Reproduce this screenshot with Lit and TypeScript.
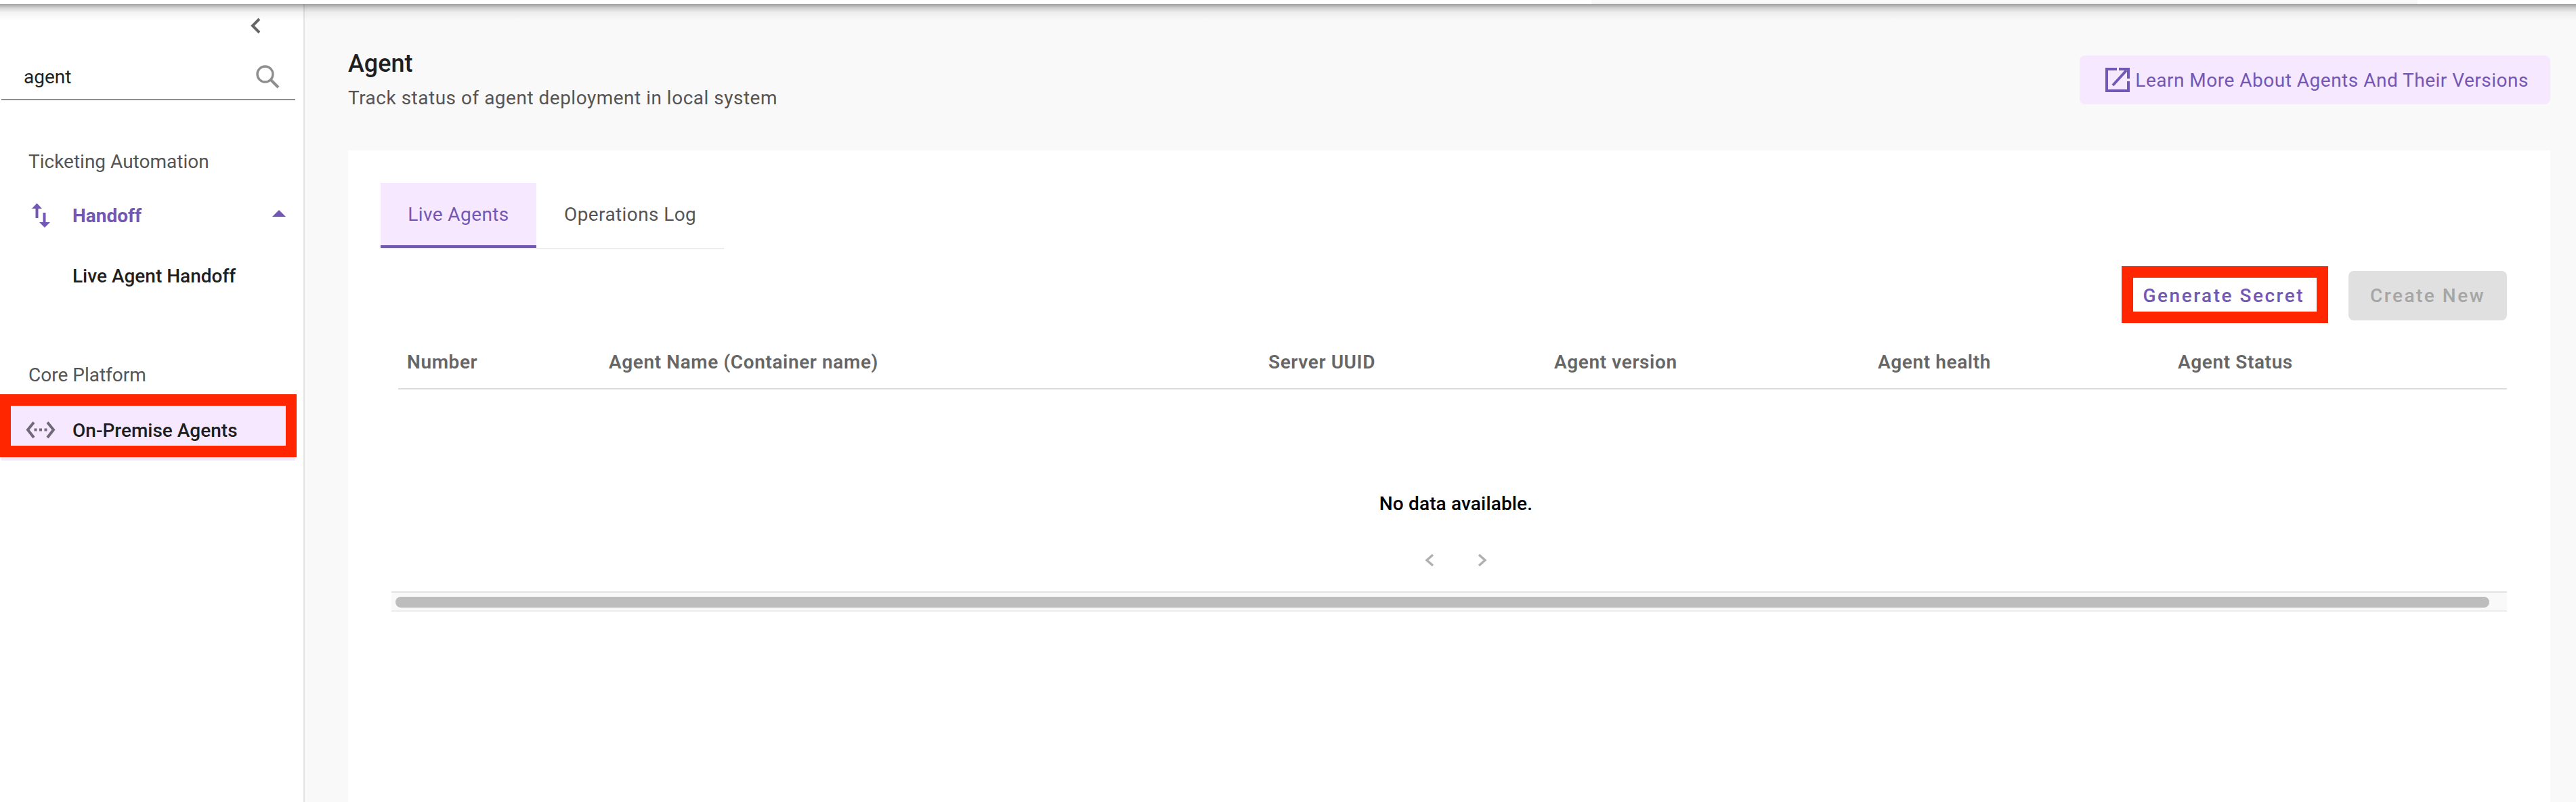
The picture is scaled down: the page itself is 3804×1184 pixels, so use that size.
import { LitElement, html, css, svg } from "lit";
import { customElement } from "lit/decorators.js";

const columns = [
  "Number",
  "Agent Name (Container name)",
  "Server UUID",
  "Agent version",
  "Agent health",
  "Agent Status",
];

@customElement("app-root")
export class AppRoot extends LitElement {
  static styles = css`
    :host {
      display: block;
      width: 3804px;
      height: 1184px;
      overflow: hidden;
      position: relative;
      font-family: Roboto, "Liberation Sans", sans-serif;
      background: #f9f9f9;
      --purple: #7357b5;
      --tint: #f6e8fe;
    }
    .topstrip {
      height: 6px;
      background: #fff;
      display: flex;
    }
    .topstrip div {
      margin-left: 2350px;
      width: 1220px;
      box-sizing: border-box;
      background: #f9f9f9;
      border-bottom: 2px solid #f0f0f0;
    }
    .layout {
      display: grid;
      grid-template-columns: 450px 1fr;
      height: 1178px;
      position: relative;
    }
    .shadow {
      position: absolute;
      left: 0;
      right: 0;
      top: 0;
      height: 24px;
      background: linear-gradient(rgba(0, 0, 0, 0.36), rgba(0, 0, 0, 0.16) 6px, rgba(0, 0, 0, 0.05) 12px, rgba(0, 0, 0, 0));
      pointer-events: none;
    }
    aside {
      background: #fff;
      border-right: 2px solid #e3e3e3;
      box-sizing: border-box;
      display: flex;
      flex-direction: column;
    }
    .collapse {
      display: flex;
      justify-content: flex-end;
      padding: 20px 62px 0 0;
      height: 56px;
      box-sizing: border-box;
    }
    .search {
      margin: 18px 12px 0 2px;
      height: 68px;
      box-sizing: border-box;
      border-bottom: 2px solid #8e8e8e;
      display: flex;
      align-items: center;
      justify-content: space-between;
      padding: 0 23px 0 33px;
      font-size: 28px;
      color: #1f1f1f;
    }
    .section {
      font-size: 28px;
      color: #555;
      padding-left: 42px;
      line-height: 32px;
    }
    .section.first {
      margin-top: 75px;
    }
    .section.second {
      margin-top: 106px;
    }
    .item {
      margin: 0 12px 0 2px;
      display: flex;
      align-items: center;
      font-size: 28px;
      font-weight: 500;
      color: #1f1f1f;
    }
    .item .ic {
      width: 105px;
      box-sizing: border-box;
      flex: none;
      display: flex;
      justify-content: center;
      padding-left: 11px;
    }
    .handoff {
      margin-top: 37px;
      height: 52px;
      color: var(--purple);
      justify-content: space-between;
    }
    .handoff .left {
      display: flex;
      align-items: center;
      font-weight: 700;
    }
    .caret {
      margin: 0 14px 6px 0;
    }
    .sub {
      margin-top: 38px;
      padding-left: 105px;
      height: 50px;
    }
    .active {
      margin-top: 20px;
      height: 90px;
      background: var(--tint);
    }
    main {
      padding: 0 38px 0 64px;
      display: flex;
      flex-direction: column;
      min-width: 0;
    }
    .head {
      display: flex;
      justify-content: space-between;
      align-items: flex-start;
      height: 216px;
      padding-top: 67px;
      box-sizing: border-box;
    }
    h1 {
      margin: 0;
      font-size: 36px;
      font-weight: 500;
      line-height: 42px;
      color: #1f1f1f;
    }
    .subtitle {
      font-size: 28px;
      line-height: 34px;
      letter-spacing: 0.5px;
      margin-top: 13px;
      color: #555;
    }
    .learn {
      height: 72px;
      box-sizing: border-box;
      background: var(--tint);
      color: var(--purple);
      border-radius: 8px;
      display: flex;
      align-items: center;
      gap: 8px;
      padding: 0 32px 0 38px;
      font-size: 28px;
      letter-spacing: 0.5px;
      margin-top: 9px;
    }
    .card {
      background: #fff;
      flex: 1;
      padding: 48px 64px 0 48px;
    }
    .tabs {
      display: flex;
      width: 507px;
      border-bottom: 2px solid #ececec;
      height: 98px;
      box-sizing: border-box;
      font-size: 28px;
      letter-spacing: 0.4px;
      color: #555;
    }
    .tab {
      height: 96px;
      box-sizing: border-box;
      display: flex;
      align-items: center;
      justify-content: center;
    }
    .tab.on {
      width: 230px;
      padding-top: 1px;
      background: var(--tint);
      color: var(--purple);
      border-bottom: 4px solid var(--purple);
    }
    .tab.off {
      padding: 0 0 3px 41px;
    }
    .actions {
      display: flex;
      justify-content: flex-end;
      gap: 30px;
      margin-top: 32px;
      height: 73px;
      align-items: center;
      font-size: 28px;
      font-weight: 500;
      letter-spacing: 2.5px;
    }
    .generate {
      color: var(--purple);
      margin-right: 35px;
    }
    .create {
      width: 234px;
      height: 73px;
      display: flex;
      align-items: center;
      justify-content: center;
      background: #e0e0e0;
      color: #a6a6a6;
      border-radius: 8px;
    }
    .grid {
      margin-left: 26px;
      margin-top: 26px;
    }
    .row {
      display: grid;
      grid-template-columns: 298px 974px 422px 478px 443px 1fr;
      height: 76px;
      box-sizing: border-box;
      border-bottom: 2px solid #dcdcdc;
      padding: 0 0 3px 13px;
      align-items: center;
      font-size: 28px;
      letter-spacing: 0.6px;
      font-weight: 600;
      color: #666;
    }
    .empty {
      height: 298px;
      box-sizing: border-box;
      display: flex;
      flex-direction: column;
      align-items: center;
      padding: 152px 0 0 10px;
      font-size: 28px;
      font-weight: 500;
      letter-spacing: 0.15px;
      color: #000;
    }
    .pager {
      display: flex;
      gap: 64px;
      margin-top: 57px;
    }
    .bar {
      margin-left: -10px;
      height: 30px;
      box-sizing: border-box;
      border-top: 2px solid #e3e3e3;
      border-bottom: 2px solid #ececec;
      background: #f9f9f9;
      padding: 6px 26px 6px 6px;
    }
    .thumb {
      height: 16px;
      border-radius: 8px;
      background: #bdbdbd;
    }
    .mark {
      position: absolute;
      box-sizing: border-box;
      border: solid #ff2600;
      pointer-events: none;
    }
    .mark.nav {
      left: 0;
      top: 582px;
      width: 438px;
      height: 93px;
      border-width: 17px 16px;
    }
    .mark.gen {
      left: 3133px;
      top: 393px;
      width: 305px;
      height: 84px;
      border-width: 17px;
    }
    svg {
      display: block;
      flex: none;
    }
  `;

  private chevron(d: string, color: string, w: number, h: number, sw: number) {
    return html`<svg width=${w} height=${h} viewBox="0 0 ${w} ${h}" fill="none" stroke=${color} stroke-width=${sw}>
      ${svg`<path d=${d} />`}
    </svg>`;
  }

  render() {
    return html`
      <div class="topstrip"><div></div></div>
      <div class="layout">
        <aside>
          <div class="collapse">
            ${this.chevron("M13 2 L3 12 L13 22", "#666", 16, 24, 4)}
          </div>
          <div class="search">
            <span>agent</span>
            <svg width="36" height="36" viewBox="0 0 36 36" fill="none" stroke="#8e8e8e" stroke-width="3.4">
              <circle cx="14.5" cy="14.5" r="11.5" />
              <path d="M22.5 22.5 L34 34" stroke-width="4" />
            </svg>
          </div>
          <div class="section first">Ticketing Automation</div>
          <div class="item handoff">
            <div class="left">
              <div class="ic">
                <svg width="28" height="36" viewBox="0 0 28 36" fill="#7357b5">
                  <path d="M1 8 L8.5 0 L16 8 H10.5 V22 H6.5 V8 Z" />
                  <path d="M12 28 H17.5 V14 H21.5 V28 H28 L20 36 Z" />
                </svg>
              </div>
              <span>Handoff</span>
            </div>
            <svg class="caret" width="20" height="10" viewBox="0 0 20 10" fill="#7357b5">
              <path d="M10 0 L20 10 L0 10 Z" />
            </svg>
          </div>
          <div class="item sub">Live Agent Handoff</div>
          <div class="section second">Core Platform</div>
          <div class="item active">
            <div class="ic">
              <svg width="44" height="26" viewBox="0 0 44 26" fill="none" stroke="#6f6a78" stroke-width="4">
                <path d="M12 1.5 L3 12.5 L12 24" />
                <path d="M32 1.5 L41 12.5 L32 24" />
                <path d="M12.5 12.5 H16.5 M20 12.5 H24 M27.5 12.5 H31.5" />
              </svg>
            </div>
            <span>On-Premise Agents</span>
          </div>
        </aside>
        <main>
          <div class="head">
            <div>
              <h1>Agent</h1>
              <div class="subtitle">Track status of agent deployment in local system</div>
            </div>
            <div class="learn">
              <svg width="36" height="36" viewBox="0 0 36 36" fill="none" stroke="#7357b5" stroke-width="4">
                <path d="M17 2 H2 V34 H34 V20" />
                <path d="M11 26 L31 4" />
                <path d="M20 2 H36 M34 0 V16" />
              </svg>
              <span>Learn More About Agents And Their Versions</span>
            </div>
          </div>
          <div class="card">
            <div class="tabs">
              <div class="tab on">Live Agents</div>
              <div class="tab off">Operations Log</div>
            </div>
            <div class="actions">
              <span class="generate">Generate Secret</span>
              <span class="create">Create New</span>
            </div>
            <div class="grid">
              <div class="row">${columns.map((c) => html`<span>${c}</span>`)}</div>
              <div class="empty">
                <span>No data available.</span>
                <div class="pager">
                  ${this.chevron("M12 2 L3 10 L12 18", "#b0b0b0", 14, 20, 3.4)}
                  ${this.chevron("M2 2 L11 10 L2 18", "#b0b0b0", 14, 20, 3.4)}
                </div>
              </div>
              <div class="bar"><div class="thumb"></div></div>
            </div>
          </div>
        </main>
        <div class="shadow"></div>
      </div>
      <div class="mark nav"></div>
      <div class="mark gen"></div>
    `;
  }
}
